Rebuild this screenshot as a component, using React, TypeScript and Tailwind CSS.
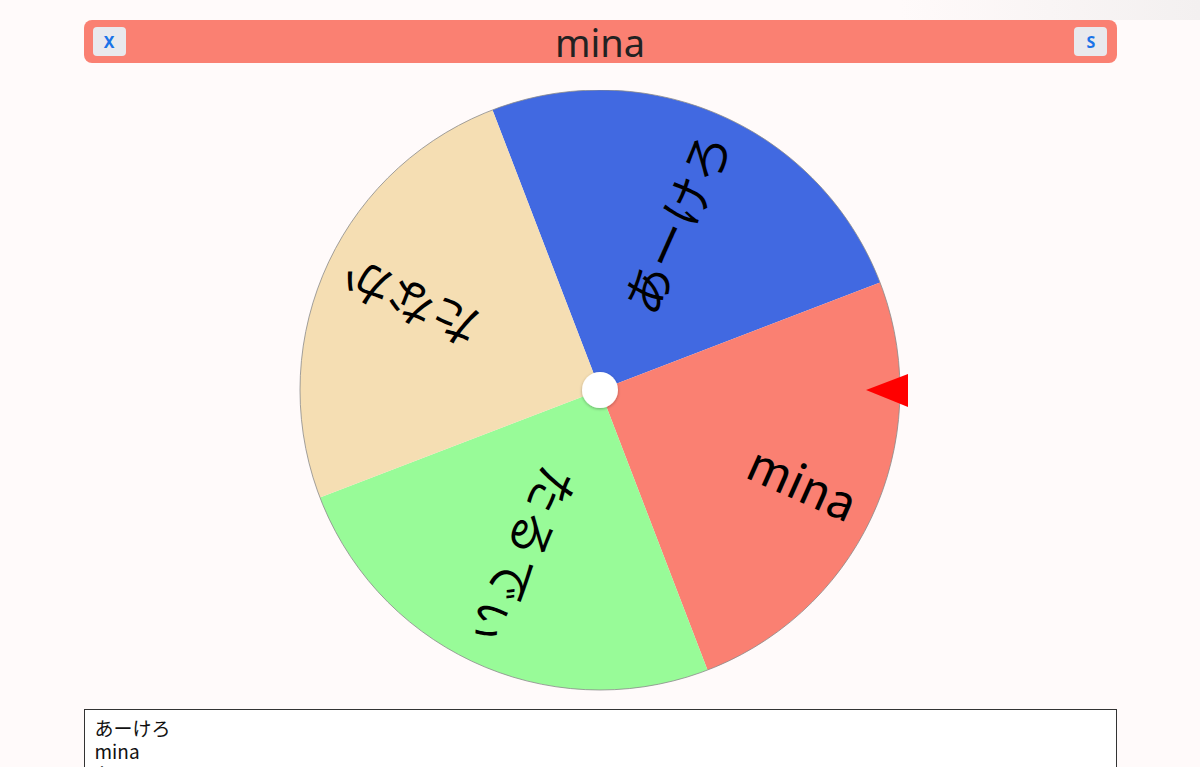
import React from 'react';

const CX = 310;
const CY = 300;
const R = 300;

const segments = [
  { name: 'あーけろ', color: '#4169e1', start: -111 },
  { name: 'mina', color: '#fa8072', start: -21 },
  { name: 'たるでぃ', color: '#98fb98', start: 69 },
  { name: 'たなか', color: '#f5deb3', start: 159 },
];

function pt(deg: number, r: number) {
  const a = (deg * Math.PI) / 180;
  return [CX + r * Math.cos(a), CY + r * Math.sin(a)];
}

function Wheel() {
  return (
    <svg width="640" height="601" viewBox="0 0 640 601" className="block">
      <defs>
        <filter id="hubShadow" x="-50%" y="-50%" width="200%" height="200%">
          <feDropShadow dx="0" dy="1" stdDeviation="1.5" floodColor="#000" floodOpacity="0.3" />
        </filter>
      </defs>
      {segments.map((s) => {
        const [x1, y1] = pt(s.start, R);
        const [x2, y2] = pt(s.start + 90, R);
        return (
          <path
            key={s.name}
            d={`M ${CX} ${CY} L ${x1} ${y1} A ${R} ${R} 0 0 1 ${x2} ${y2} Z`}
            fill={s.color}
          />
        );
      })}
      <circle cx={CX} cy={CY} r={R} fill="none" stroke="#8a8a8a" strokeWidth="0.8" />
      {segments.map((s) => (
        <g key={s.name + '-t'} transform={`rotate(${s.start + 45} ${CX} ${CY})`}>
          <text
            x={CX + 280}
            y={CY}
            textAnchor="end"
            dominantBaseline="central"
            fontSize="48"
            fill="#000"
            style={{ fontFamily: '"Noto Sans CJK JP", "Noto Sans", sans-serif' }}
          >
            {s.name}
          </text>
        </g>
      ))}
      <circle cx={CX} cy={CY} r="18" fill="#fff" filter="url(#hubShadow)" />
      <polygon points={`${CX + 266},${CY} ${CX + 308},${CY - 16} ${CX + 308},${CY + 17}`} fill="#ff0000" />
    </svg>
  );
}

export default function App() {
  return (
    <div
      className="min-h-[767px] bg-[#fffafa] text-[#222]"
      style={{ fontFamily: '"Noto Sans", "Noto Sans CJK JP", sans-serif' }}
    >
      <div className="h-5 bg-gradient-to-r from-transparent from-75% to-[#f3f0f0]" />
      <div className="mx-auto w-[1033px]">
        <div className="flex h-[43px] items-center justify-between rounded-lg bg-[#fa8072] px-[9px]">
          <button className="flex h-[29px] w-[33px] items-center justify-center rounded bg-[#e9e9ed] text-[16px] font-bold text-[#1a73e8]">
            X
          </button>
          <div className="text-[38px] leading-none text-[#222]">mina</div>
          <button className="flex h-[29px] w-[33px] items-center justify-center rounded bg-[#e9e9ed] text-[16px] font-bold text-[#1a73e8]">
            S
          </button>
        </div>
        <div className="flex justify-center pt-[27px] pb-[18px]">
          <div className="pl-[20px]">
            <Wheel />
          </div>
        </div>
        <textarea
          defaultValue={'あーけろ\nmina\nたるでぃ\nたなか'}
          className="block h-[110px] w-full resize-none border border-[#333] bg-white px-[10px] py-[6px] text-[19px] leading-[23px] text-[#111] outline-none"
          style={{ fontFamily: '"Noto Sans CJK JP", "Noto Sans", sans-serif' }}
        />
      </div>
    </div>
  );
}
